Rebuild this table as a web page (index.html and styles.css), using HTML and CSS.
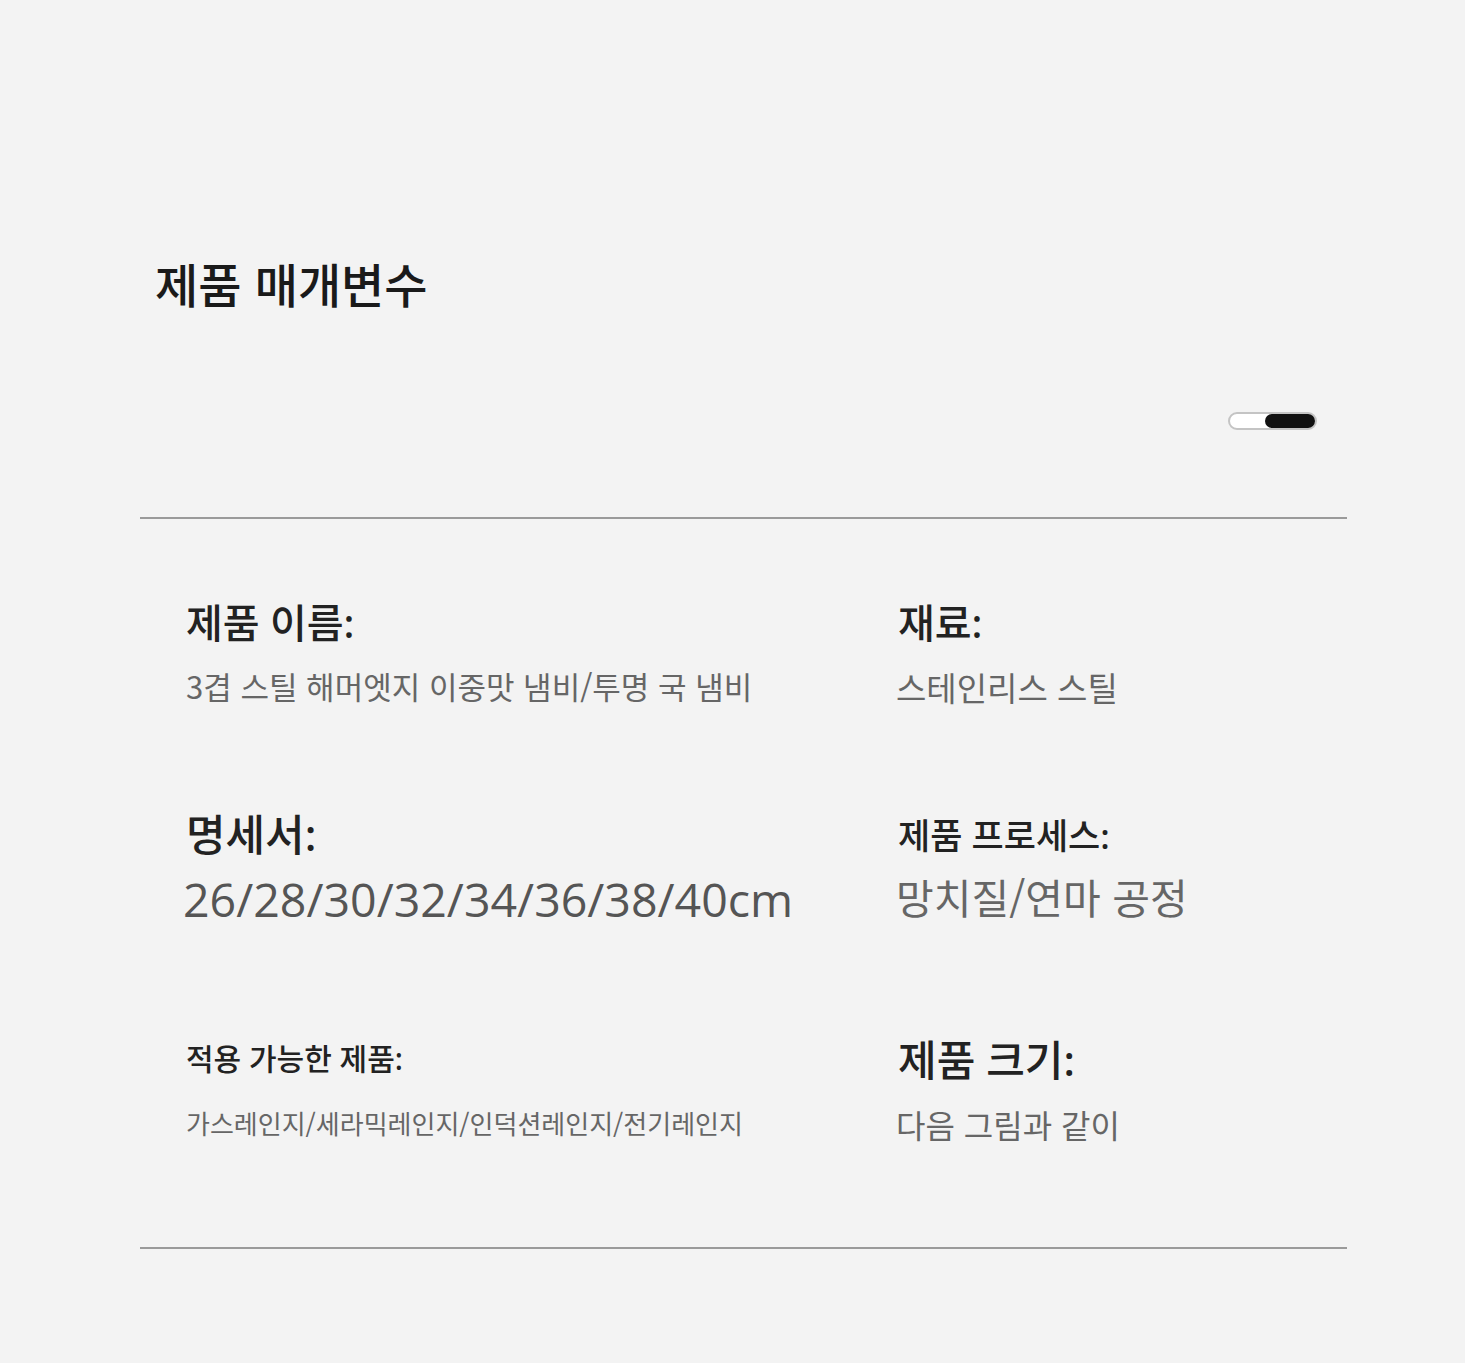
FILE: index.html
```html
<html lang="ko">
<head>
    <meta charset="UTF-8">
    <meta name="viewport" content="width=device-width, initial-scale=1.0">
    <title>제품 매개변수</title>
    <link rel="stylesheet" href="styles.css">
</head>
<body>
    <div class="params">
        <div class="params-head">
            <h2>제품 매개변수</h2>
            <div class="slider"><span class="slider-thumb"></span></div>
        </div>

        <div class="spec-grid">
            <div class="spec">
                <div class="spec-label name">제품 이름:</div>
                <div class="spec-value name">3겹 스틸 해머엣지 이중맛 냄비/투명 국 냄비</div>
            </div>
            <div class="spec">
                <div class="spec-label name">재료:</div>
                <div class="spec-value material">스테인리스 스틸</div>
            </div>
            <div class="spec">
                <div class="spec-label size">명세서:</div>
                <div class="spec-value num">26/28/30/32/34/36/38/40cm</div>
            </div>
            <div class="spec">
                <div class="spec-label process">제품 프로세스:</div>
                <div class="spec-value process">망치질/연마 공정</div>
            </div>
            <div class="spec">
                <div class="spec-label usage">적용 가능한 제품:</div>
                <div class="spec-value usage">가스레인지/세라믹레인지/인덕션레인지/전기레인지</div>
            </div>
            <div class="spec">
                <div class="spec-label dims">제품 크기:</div>
                <div class="spec-value dims">다음 그림과 같이</div>
            </div>
        </div>
    </div>
</body>
</html>
```

FILE: styles.css
```css
body {
    margin: 0;
    background-color: #f3f3f3;
    font-family: "Noto Sans CJK KR", "Noto Sans", sans-serif;
    color: #222;
}
.params {
    margin-left: 140px;
    width: 1207px;
    padding-top: 253px;
}
.params-head {
    display: flex;
    flex-direction: column;
    padding: 0 30px 87px 15px;
    border-bottom: 2px solid #9a9a9a;
}
.params-head h2 {
    margin: 0;
    font-size: 47px;
    font-weight: 500;
    line-height: 60px;
    color: #1a1a1a;
}
.slider {
    align-self: flex-end;
    margin-top: 99px;
    width: 85px;
    height: 14px;
    border: 2px solid #c4c4c4;
    border-radius: 9px;
    background-color: #fff;
    display: flex;
    justify-content: flex-end;
}
.slider-thumb {
    width: 50px;
    height: 14px;
    border-radius: 7px;
    background-color: #111;
}
.spec-grid {
    display: grid;
    grid-template-columns: 712px 1fr;
    grid-template-rows: 210px 230px 210px;
    padding: 78px 0 0 46px;
    border-bottom: 2px solid #9a9a9a;
}
.spec-label {
    font-family: "Noto Sans", "Noto Sans CJK KR", sans-serif;
    font-weight: 500;
    color: #222;
    line-height: 1.3;
}
.spec-value {
    line-height: 1.3;
    color: #666;
}

.spec-label.name { font-size: 40px; margin-bottom: 17px; }
.spec-value.name { font-size: 31px; }
.spec-value.material { font-size: 33px; margin-left: -2px; }

.spec-label.size { font-size: 43px; margin-bottom: 6px; }
.spec-value.num {
    font-family: "Open Sans", "Noto Sans CJK KR", sans-serif;
    font-size: 46.5px;
    color: #555;
    margin-left: -3px;
}
.spec-label.process { font-size: 35px; margin: 6px 0 11px; }
.spec-value.process { font-size: 41px; margin-left: -2px; }

.spec-label.usage { font-size: 30px; margin: 2px 0 28px; }
.spec-value.usage { font-size: 26px; }
.spec-label.dims { font-size: 42px; margin: -4px 0 16px; }
.spec-value.dims { font-size: 32px; margin-left: -2px; }
```
